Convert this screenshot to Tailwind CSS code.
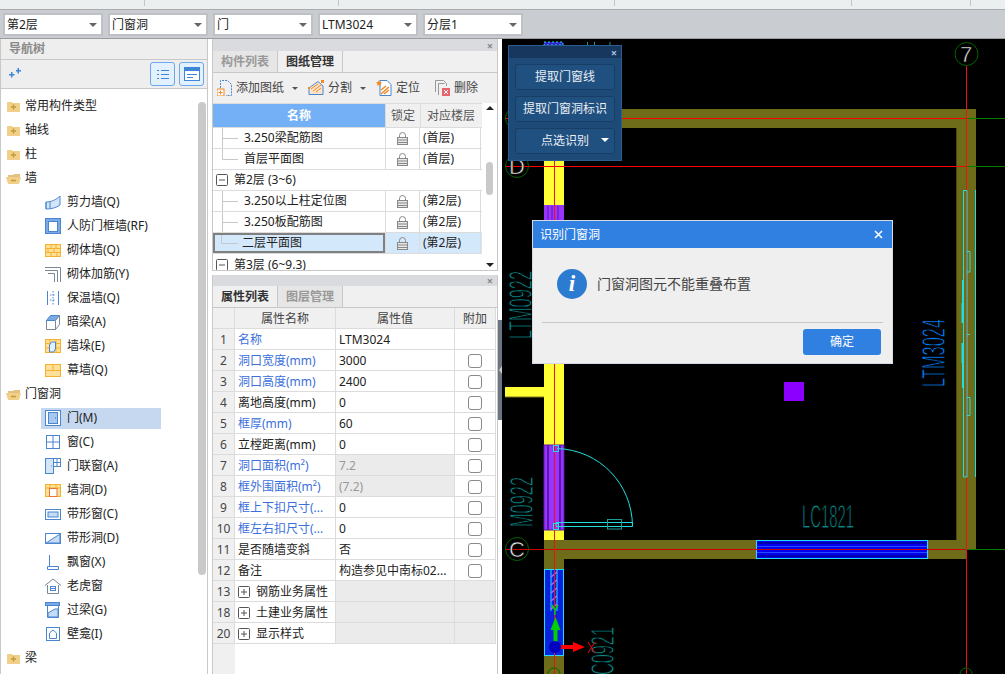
<!DOCTYPE html>
<html lang="zh-CN">

<head>
    <meta charset="UTF-8">
    <title>识别门窗洞</title>
    <script src="https://cdn.jsdelivr.net/npm/@tailwindcss/browser@4"></script>
</head>

<body class="w-[1005px] h-[674px] overflow-hidden bg-white text-[12px] leading-none text-[#222] font-['Noto_Sans','Noto_Sans_CJK_SC',sans-serif]">

    <!-- ribbon bottom edge -->
    <div class="flex h-[10px] bg-[#eceff0] border-b border-[#a9abae] overflow-hidden text-[#444]">
        <div class="w-[145px] border-r border-[#c4c6c8] h-[6px] text-center pr-[15px]"><p class="-mt-[14px] leading-[17px]">选择</p></div>
        <div class="w-[194px] border-r border-[#c4c6c8] h-[6px] text-center pr-[15px]"><p class="-mt-[14px] leading-[17px]">轴线操作</p></div>
        <div class="w-[276px] border-r border-[#c4c6c8] h-[6px] text-center pr-[18px]"><p class="-mt-[14px] leading-[17px]">通用操作</p></div>
        <div class="w-[237px] border-r border-[#c4c6c8] h-[6px] text-center pr-[12px]"><p class="-mt-[14px] leading-[17px]">修改</p></div>
        <div class="w-[119px] border-r border-[#c4c6c8] h-[6px] text-center pr-[14px]"><p class="-mt-[14px] leading-[17px]">退出</p></div>
    </div>

    <!-- selectors -->
    <div class="flex items-start gap-[5px] h-[29px] pt-[3px] pl-[3px] bg-[#c9ccd0] border-b border-[#9a9c9f]">
        <div class="flex items-center justify-between w-[100px] h-[23px] pl-[2px] pr-[4px] bg-white border-2 border-[#bfc1c4]"><span>第2层</span><i class="w-0 h-0 border-x-[4px] border-x-transparent border-t-[4px] border-t-[#666]"></i></div>
        <div class="flex items-center justify-between w-[100px] h-[23px] pl-[2px] pr-[4px] bg-white border-2 border-[#bfc1c4]"><span>门窗洞</span><i class="w-0 h-0 border-x-[4px] border-x-transparent border-t-[4px] border-t-[#666]"></i></div>
        <div class="flex items-center justify-between w-[100px] h-[23px] pl-[2px] pr-[4px] bg-white border-2 border-[#bfc1c4]"><span>门</span><i class="w-0 h-0 border-x-[4px] border-x-transparent border-t-[4px] border-t-[#666]"></i></div>
        <div class="flex items-center justify-between w-[100px] h-[23px] pl-[2px] pr-[4px] bg-white border-2 border-[#bfc1c4]"><span>LTM3024</span><i class="w-0 h-0 border-x-[4px] border-x-transparent border-t-[4px] border-t-[#666]"></i></div>
        <div class="flex items-center justify-between w-[100px] h-[23px] pl-[2px] pr-[4px] bg-white border-2 border-[#bfc1c4]"><span>分层1</span><i class="w-0 h-0 border-x-[4px] border-x-transparent border-t-[4px] border-t-[#666]"></i></div>
    </div>

    <div class="flex h-[635px]">

        <!-- NAV TREE -->
        <aside class="relative flex flex-col w-[208px] h-full border-x border-[#c8c8c8] bg-white">
            <div class="flex items-center h-[21px] pl-[8px] bg-[#eeeeee] border-b border-[#c8c8c8] font-bold text-[#8a8a8a]">导航树</div>
            <div class="flex items-center h-[29px] pl-[6px] pr-[3px] bg-[#eeeeee] border-b border-[#c8c8c8]">
                <svg class="w-[14px] h-[12px]" viewBox="0 0 14 12" fill="#3f86d8"><path d="M2 6h2V4h1.500v2h2v1.500h-2v2H4v-2H2z"/><path d="M9 2h1.500V0H12v2h2v1.500h-2v2h-1.500v-2H9z"/></svg>
                <div class="flex items-center justify-center ml-auto w-[25px] h-[24px] bg-[#e3f0fd] border border-[#69a8ee] rounded-[3px]">
                    <svg class="w-[13px] h-[13px]" viewBox="0 0 13 13" stroke="#3f86d8" fill="none"><path d="M1 2.500h2M5 2.500h8M1 6.500h2M5 6.500h8M1 10.500h2M5 10.500h8"/></svg>
                </div>
                <div class="flex items-center justify-center ml-[4px] w-[25px] h-[24px] bg-[#e3f0fd] border border-[#69a8ee] rounded-[3px]">
                    <svg class="w-[16px] h-[14px]" viewBox="0 0 16 14"><rect x="0.500" y="0.500" width="15" height="13" fill="#fff" stroke="#3f86d8"/><rect x="0" y="0" width="16" height="4" fill="#3f86d8"/><path d="M3 7.500h10M3 10.500h6" stroke="#3f86d8"/></svg>
                </div>
            </div>
            <div class="pt-[5px] whitespace-nowrap">
                <div class="flex items-center gap-[4px] h-[24px] pl-[5px]"><svg class="w-[15px] h-[13px]" viewBox="0 0 15 13"><path d="M1 2h5l1 1h7v9H1z" fill="#f0cf88"/><path d="M5 7h5M7.500 4.500v5" stroke="#c99a3c" stroke-width="1.500"/></svg>常用构件类型</div>
                <div class="flex items-center gap-[4px] h-[24px] pl-[5px]"><svg class="w-[15px] h-[13px]" viewBox="0 0 15 13"><path d="M1 2h5l1 1h7v9H1z" fill="#f0cf88"/><path d="M5 7h5M7.500 4.500v5" stroke="#c99a3c" stroke-width="1.500"/></svg>轴线</div>
                <div class="flex items-center gap-[4px] h-[24px] pl-[5px]"><svg class="w-[15px] h-[13px]" viewBox="0 0 15 13"><path d="M1 2h5l1 1h7v9H1z" fill="#f0cf88"/><path d="M5 7h5M7.500 4.500v5" stroke="#c99a3c" stroke-width="1.500"/></svg>柱</div>
                <div class="flex items-center gap-[4px] h-[24px] pl-[5px]"><svg class="w-[15px] h-[13px]" viewBox="0 0 15 13"><path d="M2 3h5l1-1h6v3H2z" fill="#e2c27e"/><path d="M0 5h15l-2 7H2z" fill="#f0cf88"/><path d="M5 8.500h5" stroke="#c99a3c" stroke-width="1.500"/></svg>墙</div>

                <div class="flex items-center gap-[6px] h-[24px] pl-[44px]"><svg class="w-[16px] h-[16px]" viewBox="0 0 16 16" fill="#d5e5f8" stroke="#4a86d0"><path d="M1 8c5 0 10-2 14-6v9c-4 3-9 4-14 4z"/><path d="M1 8v7M5 7.500v7" /></svg>剪力墙(Q)</div>
                <div class="flex items-center gap-[6px] h-[24px] pl-[44px]"><svg class="w-[16px] h-[16px]" viewBox="0 0 16 16"><rect x="0.500" y="0.500" width="15" height="15" fill="#7aa9e6" stroke="#4a86d0"/><rect x="3.500" y="3.500" width="9" height="10" fill="#fff" stroke="#4a86d0"/></svg>人防门框墙(RF)</div>
                <div class="flex items-center gap-[6px] h-[24px] pl-[44px]"><svg class="w-[16px] h-[13px]" viewBox="0 0 16 13"><rect x="0.500" y="0.500" width="15" height="12" fill="#fde09a" stroke="#f5b02e"/><path d="M0 4.500h16M0 8.500h16M6 1v3M11 1v3M3 5v3M9 5v3M6 9v3M12 9v3" stroke="#f5b02e"/></svg>砌体墙(Q)</div>
                <div class="flex items-center gap-[6px] h-[24px] pl-[44px]"><svg class="w-[16px] h-[16px]" viewBox="0 0 16 16" fill="none" stroke="#7a8794"><path d="M0 1.500h15.500V16M0 4.500h12.500V16M3 7.500h6.500V16"/></svg>砌体加筋(Y)</div>
                <div class="flex items-center gap-[6px] h-[24px] pl-[44px]"><svg class="w-[16px] h-[16px]" viewBox="0 0 16 16" fill="none" stroke="#4a86d0"><path d="M2.500 1v14M13.500 1v14"/><path d="M8 1v14M5 5h6M5 10h6" stroke-dasharray="1.500 1.500"/></svg>保温墙(Q)</div>
                <div class="flex items-center gap-[6px] h-[24px] pl-[44px]"><svg class="w-[16px] h-[16px]" viewBox="0 0 16 16" fill="#fff" stroke="#7a8794"><path d="M1.500 6.500h9v9h-9z"/><path d="M1.500 6.500l4-5h9l-4 5z" fill="#7aa9e6" stroke="#4a86d0"/><path d="M10.500 6.500l4-5v9l-4 5z"/></svg>暗梁(A)</div>
                <div class="flex items-center gap-[6px] h-[24px] pl-[44px]"><svg class="w-[16px] h-[14px]" viewBox="0 0 16 14"><rect x="0.500" y="0.500" width="15" height="13" fill="#fde09a" stroke="#f5b02e"/><path d="M0 4.500h16M0 9h16M5 0v14M11 0v14" stroke="#f5b02e"/><path d="M4.500 6l2-3h4v7l-2 3h-4z" fill="#e3f0fd" stroke="#4a86d0"/></svg>墙垛(E)</div>
                <div class="flex items-center gap-[6px] h-[24px] pl-[44px]"><svg class="w-[16px] h-[13px]" viewBox="0 0 16 13"><rect x="0.500" y="0.500" width="15" height="12" fill="#fde09a" stroke="#f5b02e"/><path d="M0 6.500h16M8 0v6" stroke="#f5b02e"/></svg>幕墙(Q)</div>

                <div class="flex items-center gap-[4px] h-[24px] pl-[5px]"><svg class="w-[15px] h-[13px]" viewBox="0 0 15 13"><path d="M2 3h5l1-1h6v3H2z" fill="#e2c27e"/><path d="M0 5h15l-2 7H2z" fill="#f0cf88"/><path d="M5 8.500h5" stroke="#c99a3c" stroke-width="1.500"/></svg>门窗洞</div>

                <div class="flex items-center h-[24px] pl-[40px]"><div class="flex items-center gap-[6px] w-[120px] h-[21px] pl-[4px] bg-[#c6d8ef]"><svg class="w-[16px] h-[16px]" viewBox="0 0 16 16"><rect x="0.500" y="0.500" width="15" height="15" fill="#fff" stroke="#4a86d0"/><rect x="3.500" y="2.500" width="9" height="11" fill="#a9c8ef" stroke="#4a86d0"/><path d="M10 8h1" stroke="#2e6cb8"/></svg>门(M)</div></div>
                <div class="flex items-center gap-[6px] h-[24px] pl-[44px]"><svg class="w-[16px] h-[16px]" viewBox="0 0 16 16" fill="none" stroke="#4a86d0"><rect x="1.500" y="1.500" width="13" height="13"/><path d="M8 2v12M2 8h12"/></svg>窗(C)</div>
                <div class="flex items-center gap-[6px] h-[24px] pl-[44px]"><svg class="w-[16px] h-[16px]" viewBox="0 0 16 16" fill="#fff" stroke="#4a86d0"><rect x="0.500" y="0.500" width="8" height="15" fill="#d5e5f8"/><rect x="8.500" y="0.500" width="7" height="8"/><path d="M12 1v7M9 4.500h6M6 8h1"/></svg>门联窗(A)</div>
                <div class="flex items-center gap-[6px] h-[24px] pl-[44px]"><svg class="w-[16px] h-[13px]" viewBox="0 0 16 13"><rect x="0.500" y="0.500" width="15" height="12" fill="#fde09a" stroke="#f5b02e"/><path d="M0 4h16M5 0v4M11 0v4" stroke="#f5b02e"/><rect x="4.500" y="4.500" width="7.500" height="8" fill="#fff" stroke="#e8763a"/></svg>墙洞(D)</div>
                <div class="flex items-center gap-[6px] h-[24px] pl-[44px]"><svg class="w-[16px] h-[11px]" viewBox="0 0 16 11"><rect x="0.500" y="0.500" width="15" height="10" fill="#fff" stroke="#4a86d0"/><rect x="3" y="3" width="10" height="5" fill="#c6dcf6" stroke="#4a86d0"/></svg>带形窗(C)</div>
                <div class="flex items-center gap-[6px] h-[24px] pl-[44px]"><svg class="w-[16px] h-[11px]" viewBox="0 0 16 11"><rect x="0.500" y="0.500" width="15" height="10" fill="#fff" stroke="#4a86d0"/><path d="M1 10L15 1v9z" fill="#c6dcf6" stroke="#4a86d0"/></svg>带形洞(D)</div>
                <div class="flex items-center gap-[6px] h-[24px] pl-[44px]"><svg class="w-[16px] h-[16px]" viewBox="0 0 16 16" fill="none" stroke="#4a86d0"><path d="M4.500 1v11.500h9v3h-11v-3h2"/></svg>飘窗(X)</div>
                <div class="flex items-center gap-[6px] h-[24px] pl-[44px]"><svg class="w-[16px] h-[16px]" viewBox="0 0 16 16" fill="none" stroke="#7a8794"><path d="M0 7.500L8 1l8 6.500M2.500 7v8.500h11V7"/><rect x="5.500" y="8.500" width="5" height="4" stroke="#4a86d0"/><path d="M5.500 10.500h5" stroke="#4a86d0"/></svg>老虎窗</div>
                <div class="flex items-center gap-[6px] h-[24px] pl-[44px]"><svg class="w-[16px] h-[16px]" viewBox="0 0 16 16" fill="none" stroke="#4a86d0"><rect x="0.500" y="0.500" width="14" height="3" fill="#7aa9e6"/><path d="M2.500 4v11.500h11V4"/><path d="M3 15v-4l7-4h3v8z" fill="#c6dcf6"/></svg>过梁(G)</div>
                <div class="flex items-center gap-[6px] h-[24px] pl-[44px]"><svg class="w-[16px] h-[16px]" viewBox="0 0 16 16" fill="none" stroke="#4a86d0"><rect x="1.500" y="1.500" width="13" height="13"/><path d="M4.500 12.500V7L8 4l3.500 3v5.500z"/></svg>壁龛(I)</div>
                <div class="flex items-center gap-[4px] h-[24px] pl-[5px]"><svg class="w-[15px] h-[13px]" viewBox="0 0 15 13"><path d="M1 2h5l1 1h7v9H1z" fill="#f0cf88"/><path d="M5 7h5M7.500 4.500v5" stroke="#c99a3c" stroke-width="1.500"/></svg>梁</div>
            </div>
            <div class="absolute right-[1px] top-[63px] w-[8px] h-[473px] bg-[#c9c9c9] rounded-[4px]"></div>
        </aside>

        <!-- MIDDLE PANELS -->
        <section class="flex flex-col w-[286px] ml-[4px] h-full">

            <!-- drawing manager -->
            <div class="flex flex-col h-[232px] border-x border-b border-[#c8c8c8] bg-white">
                <div class="flex items-center justify-end h-[12px] pr-[4px] bg-[#d9dbde] text-[#8a8a8a] text-[11px] font-bold">×</div>
                <div class="flex h-[22px] bg-[#f0f0f0] border-b border-[#c8c8c8]">
                    <div class="flex items-center justify-center w-[65px] bg-[#e6e6e6] border-r border-[#c8c8c8] font-bold text-[#999]">构件列表</div>
                    <div class="flex items-center justify-center w-[65px] border-r border-[#c8c8c8] font-bold text-[#333]">图纸管理</div>
                </div>
                <div class="flex items-center h-[30px] pl-[4px] bg-[#f0f0f0] text-[#444]">
                    <svg class="w-[15px] h-[16px]" viewBox="0 0 15 16" fill="none"><path d="M3.500 8V.500h7l4 4v11H9" stroke="#4a86d0" stroke-dasharray="2 1"/><rect x="0" y="9" width="7" height="7" fill="#fff" stroke="#f08a24"/><path d="M1.500 12.500h4M3.500 10.500v4" stroke="#f08a24"/></svg>
                    <span class="ml-[4px]">添加图纸</span>
                    <i class="ml-[8px] w-0 h-0 border-x-[3px] border-x-transparent border-t-[3px] border-t-[#555]"></i>
                    <svg class="ml-[10px] w-[16px] h-[16px]" viewBox="0 0 16 16" fill="none"><path d="M1 14.500h14V6L10 1.500 1 8z" fill="#fbe3cc" stroke="#4a86d0"/><path d="M3 9l7-5M5 11l8-6M8 12l5-4" stroke="#f08a24"/><rect x="0" y="7" width="2" height="2" fill="#f08a24"/><rect x="13" y="0" width="3" height="3" fill="#f08a24"/></svg>
                    <span class="ml-[4px]">分割</span>
                    <i class="ml-[8px] w-0 h-0 border-x-[3px] border-x-transparent border-t-[3px] border-t-[#555]"></i>
                    <svg class="ml-[10px] w-[16px] h-[16px]" viewBox="0 0 16 16" fill="none"><path d="M4 .500h7l4 4v11H4z" fill="#fff" stroke="#4a86d0"/><path d="M5 14l8-7M8 14l5-4M5 10l5-4" stroke="#f08a24" stroke-width="1.500"/><path d="M3 0l1 2 2 .500-1.500 1.500.300 2L3 5 1.200 6l.300-2L0 2.500 2 2z" fill="#f08a24"/></svg>
                    <span class="ml-[4px]">定位</span>
                    <svg class="ml-[14px] w-[16px] h-[16px]" viewBox="0 0 16 16" fill="none"><path d="M1.500 12V.500h8l3 3V6" stroke="#999"/><path d="M4.500 15V3.500h6" stroke="#999"/><rect x="8" y="8" width="8" height="8" fill="#e8636b"/><path d="M10 10l4 4M14 10l-4 4" stroke="#fff"/></svg>
                    <span class="ml-[4px]">删除</span>
                </div>
                <div class="flex flex-1 min-h-0">
                    <div class="w-[269px] overflow-hidden">
                        <div class="flex h-[25px] bg-[#f0f0f0] border-y border-[#dcdcdc]">
                            <div class="flex items-center justify-center w-[172px] bg-[#74b0f5] font-bold text-white">名称</div>
                            <div class="flex items-center justify-center w-[35px] border-l border-[#dcdcdc] text-[#555]">锁定</div>
                            <div class="flex items-center justify-center w-[61px] border-l border-[#dcdcdc] text-[#555]">对应楼层</div>
                        </div>
                        <div class="flex h-[21px] border-b border-[#dcdcdc]">
                            <div class="flex items-center w-[172px]"><svg class="w-[31px] h-[20px]" viewBox="0 0 31 20" stroke="#c8c8c8" fill="none"><path d="M9.500 0v20M9.500 10.500H25"/></svg>3.250梁配筋图</div>
                            <div class="flex items-center justify-center w-[35px] border-x border-[#dcdcdc]"><svg class="w-[11px] h-[13px]" viewBox="0 0 11 13" fill="none" stroke="#888"><path d="M2.500 6V3.500a3 3 0 016 0V6"/><rect x="0.500" y="5.500" width="10" height="7" fill="#e8e8e8"/><path d="M1 8h9M1 10.500h9"/></svg></div>
                            <div class="flex items-center w-[61px] pl-[3px] border-r border-[#dcdcdc]">(首层)</div>
                        </div>
                        <div class="flex h-[21px] border-b border-[#dcdcdc]">
                            <div class="flex items-center w-[172px]"><svg class="w-[31px] h-[20px]" viewBox="0 0 31 20" stroke="#c8c8c8" fill="none"><path d="M9.500 0v10.500H25"/></svg>首层平面图</div>
                            <div class="flex items-center justify-center w-[35px] border-x border-[#dcdcdc]"><svg class="w-[11px] h-[13px]" viewBox="0 0 11 13" fill="none" stroke="#888"><path d="M2.500 6V3.500a3 3 0 016 0V6"/><rect x="0.500" y="5.500" width="10" height="7" fill="#e8e8e8"/><path d="M1 8h9M1 10.500h9"/></svg></div>
                            <div class="flex items-center w-[61px] pl-[3px] border-r border-[#dcdcdc]">(首层)</div>
                        </div>
                        <div class="flex items-center h-[21px] pl-[3px] border-b border-[#dcdcdc]"><svg class="w-[12px] h-[12px]" viewBox="0 0 12 12" fill="#fff" stroke="#555"><rect x="0.500" y="0.500" width="11" height="11" rx="1"/><path d="M3 6h6"/></svg><span class="ml-[6px]">第2层 (3~6)</span></div>
                        <div class="flex h-[21px] border-b border-[#dcdcdc]">
                            <div class="flex items-center w-[172px]"><svg class="w-[31px] h-[20px]" viewBox="0 0 31 20" stroke="#c8c8c8" fill="none"><path d="M9.500 0v20M9.500 10.500H25"/></svg>3.250以上柱定位图</div>
                            <div class="flex items-center justify-center w-[35px] border-x border-[#dcdcdc]"><svg class="w-[11px] h-[13px]" viewBox="0 0 11 13" fill="none" stroke="#888"><path d="M2.500 6V3.500a3 3 0 016 0V6"/><rect x="0.500" y="5.500" width="10" height="7" fill="#e8e8e8"/><path d="M1 8h9M1 10.500h9"/></svg></div>
                            <div class="flex items-center w-[61px] pl-[3px] border-r border-[#dcdcdc]">(第2层)</div>
                        </div>
                        <div class="flex h-[21px] border-b border-[#dcdcdc]">
                            <div class="flex items-center w-[172px]"><svg class="w-[31px] h-[20px]" viewBox="0 0 31 20" stroke="#c8c8c8" fill="none"><path d="M9.500 0v20M9.500 10.500H25"/></svg>3.250板配筋图</div>
                            <div class="flex items-center justify-center w-[35px] border-x border-[#dcdcdc]"><svg class="w-[11px] h-[13px]" viewBox="0 0 11 13" fill="none" stroke="#888"><path d="M2.500 6V3.500a3 3 0 016 0V6"/><rect x="0.500" y="5.500" width="10" height="7" fill="#e8e8e8"/><path d="M1 8h9M1 10.500h9"/></svg></div>
                            <div class="flex items-center w-[61px] pl-[3px] border-r border-[#dcdcdc]">(第2层)</div>
                        </div>
                        <div class="flex h-[21px] border-b border-[#dcdcdc] bg-[#d4e8fc]">
                            <div class="flex items-center w-[172px] border-2 border-[#808080]"><svg class="-ml-[2px] w-[29px] h-[17px]" viewBox="0 0 29 17" stroke="#c8c8c8" fill="none"><path d="M8.500 0v8.500H25"/></svg>二层平面图</div>
                            <div class="flex items-center justify-center w-[35px] border-x border-[#dcdcdc]"><svg class="w-[11px] h-[13px]" viewBox="0 0 11 13" fill="none" stroke="#888"><path d="M2.500 6V3.500a3 3 0 016 0V6"/><rect x="0.500" y="5.500" width="10" height="7" fill="#e8e8e8"/><path d="M1 8h9M1 10.500h9"/></svg></div>
                            <div class="flex items-center w-[61px] pl-[3px] border-r border-[#dcdcdc]">(第2层)</div>
                        </div>
                        <div class="flex items-center h-[21px] pl-[3px]"><svg class="w-[12px] h-[12px]" viewBox="0 0 12 12" fill="#fff" stroke="#555"><rect x="0.500" y="0.500" width="11" height="11" rx="1"/><path d="M3 6h6"/></svg><span class="ml-[6px]">第3层 (6~9.3)</span></div>
                    </div>
                    <div class="flex flex-col items-center justify-between w-[15px] py-[3px]">
                        <i class="w-0 h-0 border-x-[4px] border-x-transparent border-b-[4px] border-b-[#222]"></i>
                        <div class="w-[7px] h-[33px] -mt-[16px] bg-[#c9c9c9] rounded-[4px]"></div>
                        <i class="w-0 h-0 border-x-[4px] border-x-transparent border-t-[4px] border-t-[#222]"></i>
                    </div>
                </div>
            </div>

            <!-- property list -->
            <div class="flex flex-col flex-1 mt-[4px] border-x border-[#c8c8c8] bg-white">
                <div class="flex items-center justify-end h-[11px] pr-[4px] bg-[#d9dbde] text-[#8a8a8a] text-[11px] font-bold">×</div>
                <div class="flex h-[22px] bg-[#f0f0f0] border-b border-[#c8c8c8]">
                    <div class="flex items-center justify-center w-[65px] border-r border-[#c8c8c8] font-bold text-[#333]">属性列表</div>
                    <div class="flex items-center justify-center w-[65px] bg-[#e6e6e6] border-r border-[#c8c8c8] font-bold text-[#999]">图层管理</div>
                </div>
                <div class="grid grid-cols-[22px_101px_119px_41px] auto-rows-[21px] w-[283px] [&>div]:flex [&>div]:items-center [&>div]:pt-[2px] [&>div]:border-b [&>div]:border-r [&>div]:border-[#dcdcdc]">
                    <div class="bg-[#f0f0f0]"></div><div class="justify-center bg-[#f0f0f0] text-[#444]">属性名称</div><div class="justify-center bg-[#f0f0f0] text-[#444]">属性值</div><div class="justify-center bg-[#f0f0f0] text-[#444]">附加</div>

                    <div class="justify-center bg-[#f0f0f0] text-[#444]">1</div><div class="pl-[3px] text-[#3b6fdc]">名称</div><div class="pl-[3px]">LTM3024</div><div></div>
                    <div class="justify-center bg-[#f0f0f0] text-[#444]">2</div><div class="pl-[3px] text-[#3b6fdc]">洞口宽度(mm)</div><div class="pl-[3px]">3000</div><div class="justify-center"><i class="w-[14px] h-[14px] bg-white border border-[#8a8a8a] rounded-[3px]"></i></div>
                    <div class="justify-center bg-[#f0f0f0] text-[#444]">3</div><div class="pl-[3px] text-[#3b6fdc]">洞口高度(mm)</div><div class="pl-[3px]">2400</div><div class="justify-center"><i class="w-[14px] h-[14px] bg-white border border-[#8a8a8a] rounded-[3px]"></i></div>
                    <div class="justify-center bg-[#f0f0f0] text-[#444]">4</div><div class="pl-[3px]">离地高度(mm)</div><div class="pl-[3px]">0</div><div class="justify-center"><i class="w-[14px] h-[14px] bg-white border border-[#8a8a8a] rounded-[3px]"></i></div>
                    <div class="justify-center bg-[#f0f0f0] text-[#444]">5</div><div class="pl-[3px] text-[#3b6fdc]">框厚(mm)</div><div class="pl-[3px]">60</div><div class="justify-center"><i class="w-[14px] h-[14px] bg-white border border-[#8a8a8a] rounded-[3px]"></i></div>
                    <div class="justify-center bg-[#f0f0f0] text-[#444]">6</div><div class="pl-[3px]">立樘距离(mm)</div><div class="pl-[3px]">0</div><div class="justify-center"><i class="w-[14px] h-[14px] bg-white border border-[#8a8a8a] rounded-[3px]"></i></div>
                    <div class="justify-center bg-[#f0f0f0] text-[#444]">7</div><div class="pl-[3px] text-[#3b6fdc]">洞口面积(m²)</div><div class="pl-[3px] bg-[#ebebeb] text-[#999]">7.2</div><div class="justify-center"><i class="w-[14px] h-[14px] bg-white border border-[#8a8a8a] rounded-[3px]"></i></div>
                    <div class="justify-center bg-[#f0f0f0] text-[#444]">8</div><div class="pl-[3px] text-[#3b6fdc]">框外围面积(m²)</div><div class="pl-[3px] bg-[#ebebeb] text-[#999]">(7.2)</div><div class="justify-center"><i class="w-[14px] h-[14px] bg-white border border-[#8a8a8a] rounded-[3px]"></i></div>
                    <div class="justify-center bg-[#f0f0f0] text-[#444]">9</div><div class="pl-[3px] text-[#3b6fdc]">框上下扣尺寸(...</div><div class="pl-[3px]">0</div><div class="justify-center"><i class="w-[14px] h-[14px] bg-white border border-[#8a8a8a] rounded-[3px]"></i></div>
                    <div class="justify-center bg-[#f0f0f0] text-[#444]">10</div><div class="pl-[3px] text-[#3b6fdc]">框左右扣尺寸(...</div><div class="pl-[3px]">0</div><div class="justify-center"><i class="w-[14px] h-[14px] bg-white border border-[#8a8a8a] rounded-[3px]"></i></div>
                    <div class="justify-center bg-[#f0f0f0] text-[#444]">11</div><div class="pl-[3px]">是否随墙变斜</div><div class="pl-[3px]">否</div><div class="justify-center"><i class="w-[14px] h-[14px] bg-white border border-[#8a8a8a] rounded-[3px]"></i></div>
                    <div class="justify-center bg-[#f0f0f0] text-[#444]">12</div><div class="pl-[3px]">备注</div><div class="pl-[3px]">构造参见中南标02...</div><div class="justify-center"><i class="w-[14px] h-[14px] bg-white border border-[#8a8a8a] rounded-[3px]"></i></div>
                    <div class="justify-center bg-[#f0f0f0] text-[#444]">13</div><div class="pl-[3px] gap-[6px]"><svg class="w-[12px] h-[12px]" viewBox="0 0 12 12" fill="#fff" stroke="#555"><rect x="0.500" y="0.500" width="11" height="11" rx="1"/><path d="M3 6h6M6 3v6"/></svg>钢筋业务属性</div><div class="bg-[#ebebeb]"></div><div class="bg-[#ebebeb]"></div>
                    <div class="justify-center bg-[#f0f0f0] text-[#444]">18</div><div class="pl-[3px] gap-[6px]"><svg class="w-[12px] h-[12px]" viewBox="0 0 12 12" fill="#fff" stroke="#555"><rect x="0.500" y="0.500" width="11" height="11" rx="1"/><path d="M3 6h6M6 3v6"/></svg>土建业务属性</div><div class="bg-[#ebebeb]"></div><div class="bg-[#ebebeb]"></div>
                    <div class="justify-center bg-[#f0f0f0] text-[#444]">20</div><div class="pl-[3px] gap-[6px]"><svg class="w-[12px] h-[12px]" viewBox="0 0 12 12" fill="#fff" stroke="#555"><rect x="0.500" y="0.500" width="11" height="11" rx="1"/><path d="M3 6h6M6 3v6"/></svg>显示样式</div><div class="bg-[#ebebeb]"></div><div class="bg-[#ebebeb]"></div>
                </div>
                <div class="flex-1 w-[22px] bg-[#f0f0f0]"></div>
            </div>
        </section>

        <!-- splitter -->
        <div class="flex items-start w-[4px] bg-white">
            <div class="flex items-center justify-center w-[4px] h-[100px] mt-[281px] bg-[#6b7680]"><i class="w-0 h-0 border-y-[4px] border-y-transparent border-r-[3px] border-r-[#ccc]"></i></div>
        </div>

        <!-- CAD CANVAS -->
        <main class="relative flex-1 bg-black overflow-hidden">
            <svg class="block w-[503px] h-[635px]" viewBox="502 39 503 635" fill="none">
                <!-- walls -->
                <rect x="544" y="109" width="432" height="19" fill="#6e6c18"/>
                <rect x="956" y="109" width="20" height="440" fill="#6e6c18"/>
                <rect x="956" y="128" width="1" height="412" fill="#4a4810"/>
                <rect x="544" y="540" width="422" height="19" fill="#6e6c18"/>
                <rect x="544" y="549" width="20" height="20" fill="#6e6c18"/>
                <rect x="544" y="656" width="20" height="18" fill="#6e6c18"/>
                <rect x="544" y="160" width="20" height="380" fill="#ffff33"/>
                <rect x="505" y="387" width="39" height="10" fill="#ffff33"/>
                <path d="M505 397H544" stroke="#77771a"/>
                <!-- door M0922 and upper opening -->
                <rect x="544" y="205" width="20" height="30" fill="#9933ff"/>
                <rect x="544" y="445" width="20" height="85" fill="#9933ff" stroke="#5a18a8"/>
                <path d="M548 445v85M560 445v85" stroke="#5a18a8" stroke-width="2"/>
                <path d="M548 206v30M552 206v30M558 206v30" stroke="#5a18a8"/>
                <rect x="544" y="42" width="19" height="3" fill="#3322cc" stroke="#22dddd" stroke-dasharray="2 2"/>
                <path d="M587.500 42v3M594.500 42v3M610 42v3" stroke="#1a9a9a"/>
                <!-- window LC1821 -->
                <rect x="756.500" y="540.500" width="171" height="18" fill="#0000ee" stroke="#22ddff"/>
                <path d="M757 546.500h170M757 552.500h170" stroke="#2a4cff"/>
                <path d="M757 543h170M757 556h170" stroke="#0000aa" stroke-width="2"/>
                <!-- window C0921 -->
                <rect x="544.500" y="569.500" width="19" height="86" fill="#0a22dd" stroke="#22ddff"/>
                <path d="M551 569v42M557 569v42" stroke="#22ddff"/>
                <path d="M551 577l6-5M551 585l6-5M551 593l6-5M551 601l6-5M551 609l6-5" stroke="#bb66ee" stroke-width="1.500"/>
                <!-- red axes -->
                <rect x="505" y="118" width="461" height="1" fill="#ff0000"/>
                <rect x="505" y="166" width="461" height="1" fill="#ff0000"/>
                <rect x="505" y="549" width="461" height="1" fill="#d00000"/>
                <rect x="554" y="160" width="1" height="514" fill="#ee1111"/>
                <rect x="966" y="66" width="1" height="608" fill="#ee1111"/>
                <path d="M967 118.500H1005M967 166.500H1005M967 549.500H1005" stroke="#008000"/>
                <!-- right wall window -->
                <path d="M963.500 190.500h3.500V477h-3.500zM975.500 190v287" stroke="#22dddd"/>
                <path d="M967 251.500h3v20.500h-3M967 397.500h3v18h-3M967 334.500h3" stroke="#22dddd"/>
                <path d="M962.500 280v43M962.500 343v45" stroke="#22dddd"/>
                <path d="M962.500 303v20M962.500 343v20" stroke="#22dddd" stroke-width="2"/>
                <!-- door swing -->
                <path d="M557 448.500C600 450 632 484 632.500 526" stroke="#22dddd"/>
                <path d="M556 522.500H632.500V526.500H556Z" stroke="#22dddd"/>
                <rect x="607.500" y="519.500" width="14" height="9.500" stroke="#1a9a9a"/>
                <rect x="553.500" y="445.500" width="5" height="6" stroke="#22dddd"/>
                <rect x="553.500" y="523.500" width="5" height="6" stroke="#22dddd"/>
                <!-- purple block -->
                <rect x="784" y="382" width="20" height="19" fill="#8b00ff"/>
                <!-- axis bubbles -->
                <circle cx="966.500" cy="54" r="11.500" stroke="#006400"/>
                <circle cx="517" cy="166" r="11.500" stroke="#006400"/>
                <circle cx="517" cy="118" r="11.500" stroke="#006400"/>
                <circle cx="517" cy="549" r="11.500" stroke="#006400"/>
                <path d="M960 674a6 6 0 0112 0M548 674a6 6 0 0112 0" stroke="#006400"/>
                <text x="966" y="62" fill="#e8e8e8" stroke="#000" stroke-width="0.600" font-size="22" text-anchor="middle" font-family="Liberation Sans">7</text>
                <text x="517" y="174" fill="#e8e8e8" stroke="#000" stroke-width="0.600" font-size="22" text-anchor="middle" font-family="Liberation Sans">D</text>
                <text x="517" y="557" fill="#e8e8e8" stroke="#000" stroke-width="0.600" font-size="22" text-anchor="middle" font-family="Liberation Sans">C</text>
                <!-- CAD labels -->
                <text transform="translate(945 387) rotate(-90)" fill="#0080ff" stroke="#000" stroke-width="1.100" font-size="33" font-family="Liberation Sans" textLength="68" lengthAdjust="spacingAndGlyphs">LTM3024</text>
                <text transform="translate(532 339) rotate(-90)" fill="#0a8a8a" stroke="#000" stroke-width="1.100" font-size="33" font-family="Liberation Sans" textLength="68" lengthAdjust="spacingAndGlyphs">LTM0922</text>
                <text transform="translate(533 527) rotate(-90)" fill="#0a8a8a" stroke="#000" stroke-width="1.100" font-size="33" font-family="Liberation Sans" textLength="50" lengthAdjust="spacingAndGlyphs">M0922</text>
                <text x="802" y="528" fill="#0a8a8a" stroke="#000" stroke-width="1.100" font-size="33" font-family="Liberation Sans" textLength="52" lengthAdjust="spacingAndGlyphs">LC1821</text>
                <text transform="translate(614 686) rotate(-90)" fill="#0a8a8a" stroke="#000" stroke-width="1.100" font-size="33" font-family="Liberation Sans" textLength="59" lengthAdjust="spacingAndGlyphs">YC0921</text>
                <!-- coordinate marker -->
                <path d="M555.500 645V626" stroke="#00d000" stroke-width="4"/>
                <path d="M555.500 617l5 13h-10z" fill="#00d000"/>
                <path d="M552 605l3 5 3-5M555 610v5" stroke="#00d000" stroke-width="1.500"/>
                <path d="M560 647h16" stroke="#ff0000" stroke-width="4"/>
                <path d="M585 647l-12-5v10z" fill="#ff0000"/>
                <path d="M588 642l7 11M595 642l-7 11" stroke="#ff0000"/>
                <circle cx="555" cy="647" r="6" fill="#0000c0"/>
            </svg>

            <!-- floating tool panel -->
            <div class="absolute left-[6px] top-[6px] w-[114px] h-[116px] bg-[#1e4a78] border border-[#2c5d90]">
                <div class="flex items-center justify-end h-[12px] pr-[4px] bg-[#17375e] text-[#9fc0e0] text-[11px] font-bold">×</div>
                <div class="flex flex-col gap-[6px] px-[6px] pt-[6px] text-[#e8eef5]">
                    <div class="flex items-center justify-center h-[26px] bg-[#20507f] border border-[#193e66] rounded-[3px]">提取门窗线</div>
                    <div class="flex items-center justify-center h-[26px] bg-[#20507f] border border-[#193e66] rounded-[3px]">提取门窗洞标识</div>
                    <div class="relative flex items-center justify-center h-[26px] bg-[#20507f] border border-[#193e66] rounded-[3px]">点选识别<i class="absolute right-[5px] top-[9px] w-0 h-0 border-x-[4px] border-x-transparent border-t-[4px] border-t-white"></i></div>
                </div>
            </div>

            <!-- message dialog -->
            <div class="absolute left-[30px] top-[181px] flex flex-col w-[361px] h-[144px] bg-[#efefef] border border-[#d5dbe6]">
                <div class="flex items-center justify-between h-[27px] pl-[7px] pr-[9px] bg-[#2f80e0] text-white">识别门窗洞
                    <svg class="w-[9px] h-[9px]" viewBox="0 0 9 9" stroke="#fff" stroke-width="1.500"><path d="M1 1l7 7M8 1l-7 7"/></svg>
                </div>
                <div class="flex items-center h-[74px] pl-[24px] pb-[3px]">
                    <div class="flex items-center justify-center w-[30px] h-[30px] rounded-full bg-[#2b7bd0] text-white text-[23px] font-bold italic font-['Liberation_Serif',serif]">i</div>
                    <span class="ml-[10px] text-[14px] text-[#444]">门窗洞图元不能重叠布置</span>
                </div>
                <div class="mx-[9px] border-t border-[#c6c6c6]"></div>
                <div class="flex justify-end pt-[6px] pr-[11px]">
                    <div class="flex items-center justify-center w-[78px] h-[26px] bg-[#2f80e0] rounded-[3px] text-white">确定</div>
                </div>
            </div>
        </main>
    </div>
</body>

</html>
